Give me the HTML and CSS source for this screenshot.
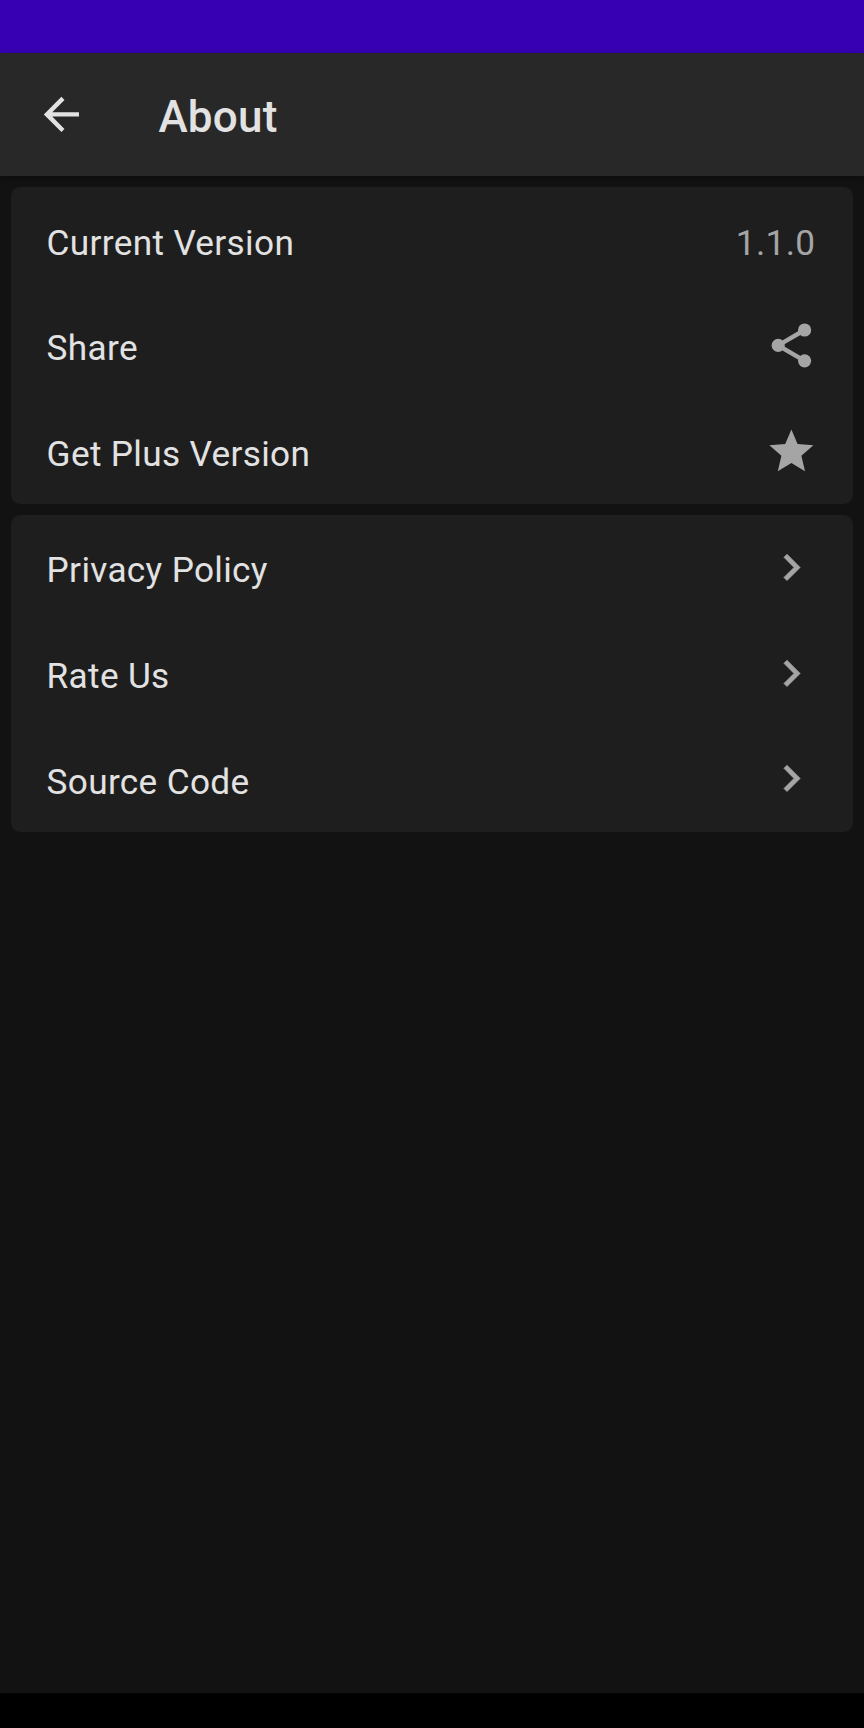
FILE: index.html
```html
<!DOCTYPE html>
<html lang="en">
<head>
<meta charset="utf-8">
<title>About</title>
<link rel="stylesheet" href="styles.css">
</head>
<body>
<div class="status-bar"></div>
<header class="toolbar">
  <svg class="icon back" viewBox="0 0 24 24"><path d="M20 11H7.83l5.59-5.59L12 4l-8 8 8 8 1.41-1.41L7.83 13H20v-2z"/></svg>
  <h1 class="title">About</h1>
</header>
<main class="content">
  <section class="card">
    <div class="row"><span class="label">Current Version</span><span class="version">1.1.0</span></div>
    <div class="row"><span class="label">Share</span><svg class="icon" viewBox="0 0 24 24"><path class="share-lines" d="M18 5L6 12l12 7"/><circle cx="18" cy="5" r="3"/><circle cx="6" cy="12" r="3"/><circle cx="18" cy="19" r="3"/></svg></div>
    <div class="row"><span class="label">Get Plus Version</span><svg class="icon" viewBox="0 0 24 24"><path d="M12 17.27L18.18 21l-1.64-7.03L22 9.24l-7.19-.61L12 2 9.19 8.63 2 9.24l5.46 4.73L5.82 21z"/></svg></div>
  </section>
  <section class="card">
    <div class="row"><span class="label">Privacy Policy</span><svg class="icon" viewBox="0 0 24 24"><path class="chevron" d="M10 6L8.59 7.41 13.17 12l-4.58 4.59L10 18l6-6z"/></svg></div>
    <div class="row"><span class="label">Rate Us</span><svg class="icon" viewBox="0 0 24 24"><path class="chevron" d="M10 6L8.59 7.41 13.17 12l-4.58 4.59L10 18l6-6z"/></svg></div>
    <div class="row"><span class="label">Source Code</span><svg class="icon" viewBox="0 0 24 24"><path class="chevron" d="M10 6L8.59 7.41 13.17 12l-4.58 4.59L10 18l6-6z"/></svg></div>
  </section>
</main>
<div class="nav-bar"></div>
</body>
</html>
```
FILE: styles.css
```css
* { box-sizing: border-box; }
body {
  margin: 0;
  height: 1728px;
  display: flex;
  flex-direction: column;
  background: #121212;
  color: #e2e2e2;
  font-family: Roboto, sans-serif;
}
.status-bar { height: 53px; background: #3700b3; }
.toolbar {
  height: 123px;
  padding: 0 35px;
  display: flex;
  align-items: center;
  background: #282828;
  box-shadow: 0 2px 6px rgba(0, 0, 0, 0.3);
}
.icon { width: 52.8px; height: 52.8px; fill: #a5a5a5; flex: none; }
.back { fill: #e2e2e2; }
.chevron { stroke: #a5a5a5; stroke-width: 0.3; stroke-linejoin: round; }
.share-lines { fill: none; stroke: #a5a5a5; stroke-width: 2; }
.title {
  margin: 4px 0 0 70.6px;
  font-size: 44px;
  line-height: 52px;
  font-weight: 500;
  letter-spacing: 0.25px;
}
.content {
  flex: 1;
  padding: 11px;
  display: flex;
  flex-direction: column;
  gap: 11px;
}
.card { border-radius: 9px; background: #1e1e1e; }
.row {
  height: 105.6px;
  padding: 0 35.6px;
  display: flex;
  align-items: center;
  justify-content: space-between;
}
.label, .version {
  padding-top: 5.6px;
  font-size: 35.2px;
  line-height: 42px;
  letter-spacing: 0.33px;
}
.version { color: #a5a5a5; padding-right: 2px; }
.nav-bar { height: 35px; background: #000; }
```
